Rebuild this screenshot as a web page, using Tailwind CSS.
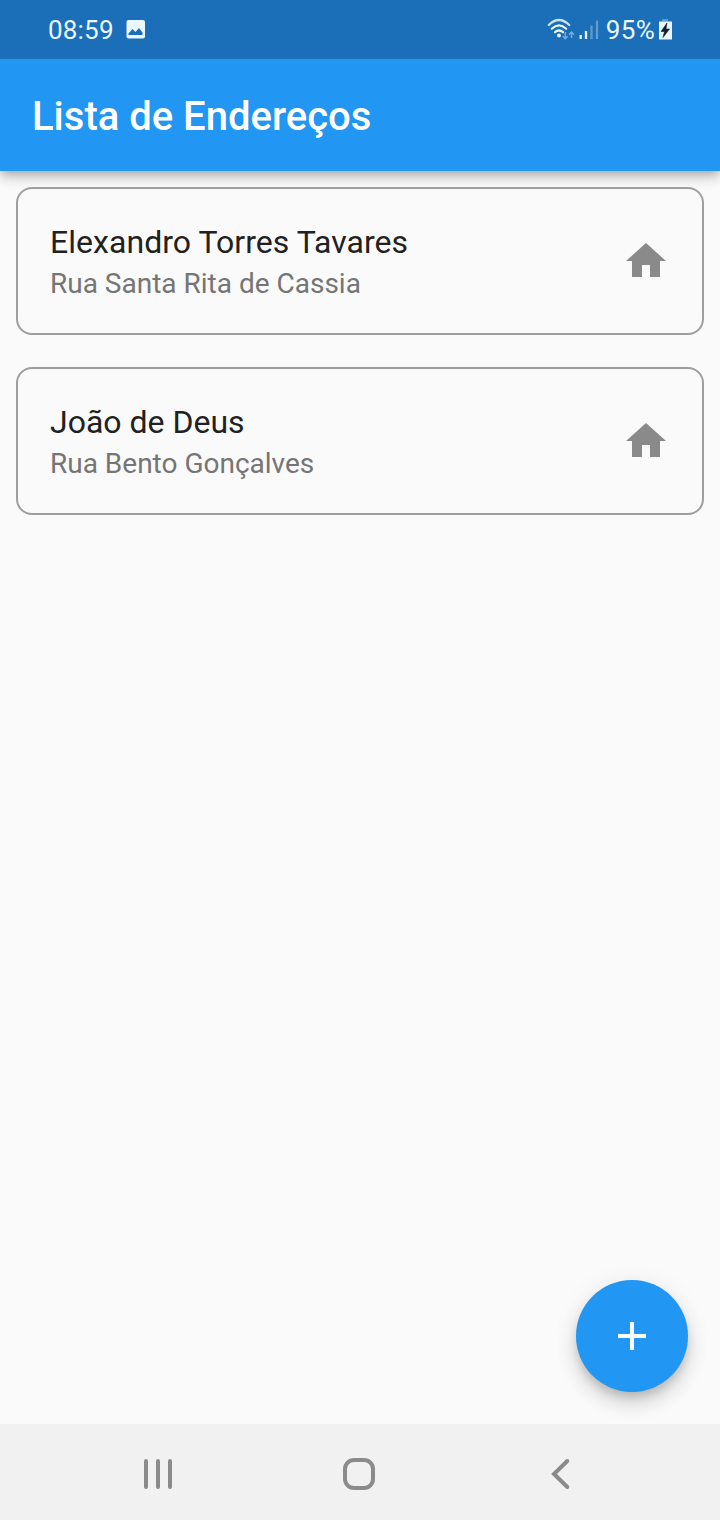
<!DOCTYPE html>
<html lang="pt-BR">
<head>
<meta charset="utf-8">
<title>Lista de Endereços</title>
<script src="https://cdn.jsdelivr.net/npm/@tailwindcss/browser@4"></script>
</head>
<body class="font-[Roboto,sans-serif] bg-[#fafafa]">
<div class="relative w-[720px] h-[1520px] flex flex-col overflow-hidden bg-[#fafafa]">
  <div class="relative z-10 h-[59px] shrink-0 bg-[#1a6fb8] flex items-center pl-12 pr-[47px] text-[#eaf6fe] text-[26px] leading-[60px]">
    <span class="tracking-[0.2px] pt-px">08:59</span>
    <svg class="ml-[12.500px] w-5 h-5" viewBox="0 0 20 20"><rect x="0.5" y="0" width="18.5" height="18.5" rx="2" fill="#eaf6fe"/><path d="M2.500 15V13.500l4-4.500 3 3 3.500-4 3.500 4.500v2.500z" fill="#1a6fb8"/></svg>
    <div class="ml-auto flex items-center">
      <svg class="w-[60px] h-6" viewBox="0 0 60 24" fill="none">
        <g stroke="#eaf6fe" stroke-width="2.200" stroke-linecap="round"><path d="M2.800 7Q13 -3 23.200 7" opacity=".85"/><path d="M5.800 10.700Q13 4 20.200 10.700"/><path d="M9 14.200Q13 10.800 17 14.200"/></g>
        <circle cx="13" cy="17.500" r="1.900" fill="#eaf6fe"/>
        <g stroke="#78acd8" stroke-width="1.500"><path d="M19.300 14v6.500M16.900 18.200l2.400 2.500 2.400-2.500M25.500 20v-6M23.100 16.600l2.400-2.500 2.400 2.500"/></g>
        <g stroke-width="2.300"><path d="M34.700 17V21M40 13V21" stroke="#eaf6fe"/><path d="M45.500 7.500V21M51 2.500V21" stroke="#5f9bcf"/></g>
      </svg>
      <span class="pt-px tracking-[0.3px]">95%</span>
      <svg class="ml-[3px] w-[15px] h-[22px]" viewBox="0 0 15 22"><path d="M4 0h6v2.500H4z" fill="#5f9bcf"/><path d="M1 2.500h13V20.500H1z" fill="#eaf6fe"/><path d="M9 4L3 12.500h3.500L5 18.500l6.500-8.500H8z" fill="#102030" stroke="#102030" stroke-width=".6"/></svg>
    </div>
  </div>
  <header class="h-28 shrink-0 bg-[#2196f3] flex items-center px-8 shadow-[0_4px_8px_-2px_rgba(0,0,0,0.2),0_8px_10px_0_rgba(0,0,0,0.12),0_2px_20px_0_rgba(0,0,0,0.08)]">
    <h1 class="text-white text-[40px] leading-[48px] font-medium pt-1">Lista de Endereços</h1>
  </header>
  <main class="grow px-4 pt-4 flex flex-col gap-8">
    <section class="h-[148px] border-2 border-[#9e9e9e] rounded-2xl px-8 flex items-center justify-between">
      <div class="pt-1.5">
        <h2 class="text-[32px] leading-[40px] tracking-[0.04px] text-[#212121]">Elexandro Torres Tavares</h2>
        <p class="text-[28px] leading-[44px] text-[#757575]">Rua Santa Rita de Cassia</p>
      </div>
      <svg class="w-12 h-12" viewBox="0 0 24 24" fill="#8a8a8a"><path d="M10 20v-6h4v6h5v-8h3L12 3 2 12h3v8z"/></svg>
    </section>
    <section class="h-[148px] border-2 border-[#9e9e9e] rounded-2xl px-8 flex items-center justify-between">
      <div class="pt-1.5">
        <h2 class="text-[32px] leading-[40px] text-[#212121]">João de Deus</h2>
        <p class="text-[28px] leading-[44px] text-[#757575]">Rua Bento Gonçalves</p>
      </div>
      <svg class="w-12 h-12" viewBox="0 0 24 24" fill="#8a8a8a"><path d="M10 20v-6h4v6h5v-8h3L12 3 2 12h3v8z"/></svg>
    </section>
  </main>
  <button class="absolute right-8 bottom-32 w-28 h-28 rounded-full bg-[#2196f3] flex items-center justify-center shadow-[0_6px_10px_-2px_rgba(0,0,0,0.16),0_12px_20px_0_rgba(0,0,0,0.14),0_2px_30px_0_rgba(0,0,0,0.05)]" aria-label="Adicionar">
    <svg class="w-12 h-12" viewBox="0 0 24 24" fill="#fff"><path d="M19 13h-6v6h-2v-6H5v-2h6V5h2v6h6z"/></svg>
  </button>
  <nav class="relative h-24 shrink-0 bg-[#f1f1f1] flex items-center pt-1">
    <svg class="ml-[142px] w-8 h-9" viewBox="0 0 32 36" fill="none" stroke="#8b8b8b" stroke-width="4" stroke-linecap="round"><path d="M4 5v26M16 5v26M28 5v26"/></svg>
    <svg class="ml-[167px] w-9 h-9" viewBox="0 0 36 36" fill="none" stroke="#8b8b8b" stroke-width="4"><rect x="4" y="4" width="28" height="28" rx="9"/></svg>
    <svg class="ml-[171px] w-6 h-9" viewBox="0 0 24 36" fill="none" stroke="#8b8b8b" stroke-width="4" stroke-linecap="round"><path d="M19.300 5L6 18l13.300 13"/></svg>
  </nav>
</div>
</body>
</html>
